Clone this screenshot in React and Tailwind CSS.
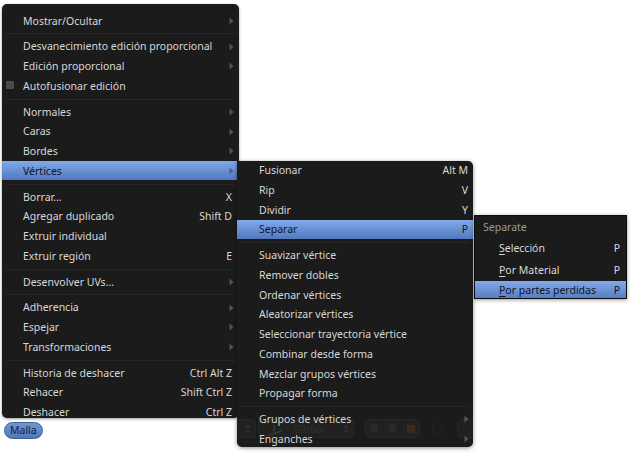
import React from "react";

const Arrow = ({ color = "#5a5a5a" }) => (
  <svg width="5" height="8" viewBox="0 0 5 8" className="shrink-0">
    <path d="M0.5 0.5 L4.5 4 L0.5 7.5 Z" fill={color} />
  </svg>
);

const UpDown = ({ className }) => (
  <svg className={className} width="6" height="12" viewBox="0 0 6 12">
    <path d="M0.5 5 L3 1.5 L5.5 5 Z" fill="#303030" />
    <path d="M0.5 7 L3 10.5 L5.5 7 Z" fill="#303030" />
  </svg>
);

function Item({ label, shortcut, arrow, active, check, pl = "pl-[21px]", pr = "pr-[7px]" }) {
  return (
    <div className={`relative flex items-center h-[19.75px] ${pl} ${pr}`}>
      {active && (
        <div className="absolute inset-x-0 top-0 bottom-[1px] bg-linear-to-b from-[#82a9ea] to-[#5279bd]" />
      )}
      {check && (
        <span className="absolute left-[4px] top-[5px] w-[8px] h-[8px] bg-[#4a4a4a] rounded-[1px]" />
      )}
      <span className={`relative flex-1 whitespace-nowrap ${active ? "text-[#0e1626]" : "text-[#d8d8d8]"}`}>
        {label}
      </span>
      {shortcut && (
        <span className={`relative whitespace-nowrap ${active ? "text-[#0e1626]" : "text-[#d8d8d8]"}`}>
          {shortcut}
        </span>
      )}
      {arrow && (
        <span className="relative mr-[-2px]">
          <Arrow color={active ? "#44649a" : "#555555"} />
        </span>
      )}
    </div>
  );
}

const Sep = () => (
  <div className="h-[6px] flex items-center px-[3px]">
    <div className="h-px w-full bg-[#262626]" />
  </div>
);

function Mn({ c }) {
  return <span className="underline underline-offset-[2px] decoration-[#d8d8d8]">{c}</span>;
}

export default function App() {
  return (
    <div className="relative w-[630px] h-[466px] bg-white overflow-hidden font-['Noto_Sans',sans-serif] text-[10.5px] leading-none">
      {/* Main menu */}
      <div className="absolute left-[2px] top-[4px] w-[237px] h-[414px] bg-[#1b1b1b] rounded-[5px] overflow-hidden pt-[7px] shadow-[0_1px_3px_rgba(0,0,0,0.4)]">
        <Item label="Mostrar/Ocultar" arrow />
        <Sep />
        <Item label="Desvanecimiento edición proporcional" arrow />
        <Item label="Edición proporcional" arrow />
        <Item label="Autofusionar edición" check />
        <Sep />
        <Item label="Normales" arrow />
        <Item label="Caras" arrow />
        <Item label="Bordes" arrow />
        <Item label="Vértices" arrow active />
        <Sep />
        <Item label="Borrar..." shortcut="X" />
        <Item label="Agregar duplicado" shortcut="Shift D" />
        <Item label="Extruir individual" />
        <Item label="Extruir región" shortcut="E" />
        <Sep />
        <Item label="Desenvolver UVs..." arrow />
        <Sep />
        <Item label="Adherencia" arrow />
        <Item label="Espejar" arrow />
        <Item label="Transformaciones" arrow />
        <Sep />
        <Item label="Historia de deshacer" shortcut="Ctrl Alt Z" />
        <Item label="Rehacer" shortcut="Shift Ctrl Z" />
        <Item label="Deshacer" shortcut="Ctrl Z" />
      </div>

      {/* Malla button */}
      <div className="absolute left-[4px] top-[422px] w-[39px] h-[17px] rounded-full bg-linear-to-b from-[#6d96da] to-[#4f78bd] border border-[#3e5f96] flex items-center pl-[5px] text-[#17233a]">
        Malla
      </div>

      {/* Vértices submenu */}
      <div className="absolute left-[237px] top-[160.5px] w-[236px] h-[286px] bg-[#1b1b1b] rounded-[5px] rounded-tl-none overflow-hidden shadow-[0_1px_4px_rgba(0,0,0,0.45)]">
        {/* header seen through the menu */}
        <div className="absolute left-0 top-[257.5px] w-full h-[22px]">
          <div className="absolute left-[-8px] top-[1px] w-[27px] h-[19px] rounded-[4px] bg-[#212121] border border-[#262626]">
            <UpDown className="absolute right-[4px] top-[3px]" />
          </div>
          <div className="absolute left-[21px] top-[1px] w-[96px] h-[19px] rounded-[4px] bg-[#212121] border border-[#262626]">
            <svg className="absolute left-[8px] top-[3px]" width="16" height="13" viewBox="0 0 16 13">
              <path d="M7 11 L7 2" stroke="#2e3a50" strokeWidth="1.5" />
              <path d="M7 11 L1 12" stroke="#452a2a" strokeWidth="1.5" />
              <path d="M7 11 L14 8" stroke="#2e4529" strokeWidth="1.5" />
            </svg>
            <span className="absolute left-[34px] top-[4px] text-[#303030]">Global</span>
            <UpDown className="absolute right-[4px] top-[3px]" />
          </div>
          <div className="absolute left-[128px] top-[1px] w-[55px] h-[19px] rounded-[4px] bg-[#212121] border border-[#262626] flex">
            <div className="flex-1 flex items-center justify-center border-r border-[#1c1c1c]">
              <div className="w-[9px] h-[9px] rounded-full bg-[#2a2a2a]" />
            </div>
            <div className="flex-1 flex items-center justify-center border-r border-[#1c1c1c]">
              <div className="w-[9px] h-[9px] rounded-full bg-[#2a2a2a]" />
            </div>
            <div className="flex-1 flex items-center justify-center">
              <div className="w-[8px] h-[8px] rounded-[1px] bg-[#3a2b1e]" />
            </div>
          </div>
          <div className="absolute left-[195px] top-[5px] w-[11px] h-[11px] rounded-full border border-dotted border-[#2e2e2e]" />
          <div className="absolute left-[220px] top-[1px] w-[30px] h-[19px] rounded-[4px] bg-[#212121] border border-[#262626]" />
        </div>

        <div className="relative">
          <Item label="Fusionar" shortcut="Alt M" pl="pl-[22px]" pr="pr-[5px]" />
          <Item label="Rip" shortcut="V" pl="pl-[22px]" pr="pr-[5px]" />
          <Item label="Dividir" shortcut="Y" pl="pl-[22px]" pr="pr-[5px]" />
          <Item label="Separar" shortcut="P" active pl="pl-[22px]" pr="pr-[5px]" />
          <Sep />
          <Item label="Suavizar vértice" pl="pl-[22px]" pr="pr-[5px]" />
          <Item label="Remover dobles" pl="pl-[22px]" pr="pr-[5px]" />
          <Item label="Ordenar vértices" pl="pl-[22px]" pr="pr-[5px]" />
          <Item label="Aleatorizar vértices" pl="pl-[22px]" pr="pr-[5px]" />
          <Item label="Seleccionar trayectoria vértice" pl="pl-[22px]" pr="pr-[5px]" />
          <Item label="Combinar desde forma" pl="pl-[22px]" pr="pr-[5px]" />
          <Item label="Mezclar grupos vértices" pl="pl-[22px]" pr="pr-[5px]" />
          <Item label="Propagar forma" pl="pl-[22px]" pr="pr-[5px]" />
          <Sep />
          <Item label="Grupos de vértices" arrow pl="pl-[22px]" pr="pr-[6px]" />
          <Item label="Enganches" arrow pl="pl-[22px]" pr="pr-[6px]" />
        </div>
      </div>

      {/* Separate popup */}
      <div className="absolute left-[474px] top-[215px] w-[153px] h-[84px] bg-[#1b1b1b] border border-[#0c0c0c] overflow-hidden shadow-[0_1px_4px_rgba(0,0,0,0.4)]">
        <div className="h-[22px] flex items-center pl-[8px] text-[#9a9a9a]">Separate</div>
        <div className="h-[21px] flex items-center pl-[24px] pr-[6px] text-[#d8d8d8]">
          <span className="flex-1"><Mn c="S" />elección</span>
          <span>P</span>
        </div>
        <div className="h-[22px] flex items-center pl-[24px] pr-[6px] text-[#d8d8d8]">
          <span className="flex-1"><Mn c="P" />or Material</span>
          <span>P</span>
        </div>
        <div className="h-[19px] flex items-center pl-[24px] pr-[6px] bg-linear-to-b from-[#82a9ea] to-[#5279bd] text-[#0e1626]">
          <span className="flex-1"><span className="underline underline-offset-[2px]">P</span>or partes perdidas</span>
          <span>P</span>
        </div>
      </div>
    </div>
  );
}
